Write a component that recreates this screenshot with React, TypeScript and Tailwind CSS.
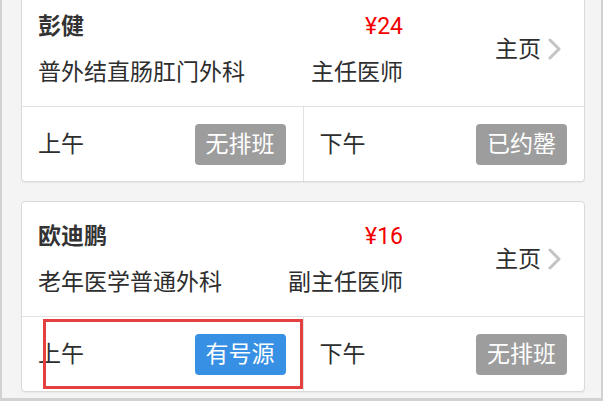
import React from "react";

type Slot = { label: string; status: string; available?: boolean };

type Doctor = {
  name: string;
  price: string;
  dept: string;
  title: string;
  slots: Slot[];
};

const doctors: Doctor[] = [
  {
    name: "彭健",
    price: "¥24",
    dept: "普外结直肠肛门外科",
    title: "主任医师",
    slots: [
      { label: "上午", status: "无排班" },
      { label: "下午", status: "已约罄" },
    ],
  },
  {
    name: "欧迪鹏",
    price: "¥16",
    dept: "老年医学普通外科",
    title: "副主任医师",
    slots: [
      { label: "上午", status: "有号源", available: true },
      { label: "下午", status: "无排班" },
    ],
  },
];

function Chevron() {
  return (
    <svg width="15" height="22" viewBox="0 0 15 22" fill="none" className="ml-[6px]">
      <polyline
        points="3,2 12,11 3,20"
        stroke="#c4c4c4"
        strokeWidth="3"
        strokeLinecap="round"
        strokeLinejoin="round"
      />
    </svg>
  );
}

function DoctorCard({ doctor, highlight }: { doctor: Doctor; highlight?: boolean }) {
  return (
    <div className="relative rounded-[4px] border border-[#dadada] bg-white shadow-[0_1px_1px_rgba(0,0,0,0.05)]">
      <div className="flex h-[114px] items-center">
        <div className="flex w-[381px] flex-col pl-[16px]">
          <div className="flex h-[33px] items-center justify-between">
            <span className="font-bold text-[#333]">{doctor.name}</span>
            <span className="text-[#f20000]">{doctor.price}</span>
          </div>
          <div className="mt-[13px] flex h-[33px] items-center justify-between">
            <span>{doctor.dept}</span>
            <span>{doctor.title}</span>
          </div>
        </div>
        <div className="flex flex-1 items-center justify-end pr-[22px]">
          <span>主页</span>
          <Chevron />
        </div>
      </div>
      <div className="flex h-[75px] border-t border-[#e2e2e2]">
        {doctor.slots.map((slot, i) => (
          <div
            key={slot.label}
            className={`flex flex-1 items-center justify-between pl-[16px] pr-[17px] ${
              i > 0 ? "border-l border-[#e2e2e2]" : ""
            }`}
          >
            <span>{slot.label}</span>
            <span
              className={`flex h-[41px] items-center rounded-[4px] px-[11px] text-white ${
                slot.available ? "bg-[#3790e4]" : "bg-[#9d9d9d]"
              }`}
            >
              {slot.status}
            </span>
          </div>
        ))}
      </div>
      {highlight && (
        <div className="pointer-events-none absolute left-[21px] top-[117px] h-[70px] w-[260px] border-[3px] border-[#e4403f]" />
      )}
    </div>
  );
}

export default function App() {
  return (
    <div
      className="h-[401px] w-[603px] overflow-hidden border-x-[2px] border-b-[3px] border-[#d2d2d2] bg-[#f4f4f4] text-[23px] leading-none text-[#2e2e2e]"
      style={{ fontFamily: 'Roboto, "Noto Sans CJK SC", "Noto Sans", sans-serif' }}
    >
      <div className="mt-[-9px] flex flex-col gap-[19px] pl-[19px] pr-[16px]">
        {doctors.map((d, i) => (
          <DoctorCard key={d.name} doctor={d} highlight={i === 1} />
        ))}
      </div>
    </div>
  );
}
